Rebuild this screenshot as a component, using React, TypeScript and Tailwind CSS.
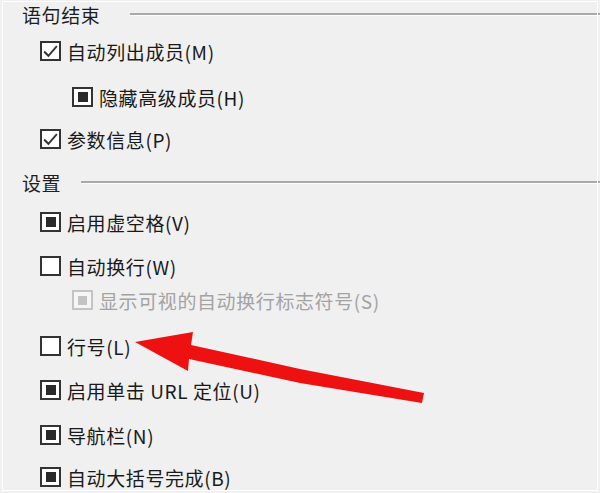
import React from "react";

type Kind = "check" | "fill" | "empty" | "disabled";

function Box({ kind }: { kind: Kind }) {
  if (kind === "disabled") {
    return (
      <div className="w-[21px] h-[20px] border-2 border-[#c4c4c4] bg-[#f6f6f6] flex items-center justify-center shrink-0">
        <div className="w-[9px] h-[9px] bg-[#c4c4c4]" />
      </div>
    );
  }
  return (
    <div className="w-[21px] h-[20px] border-2 border-[#333333] bg-white flex items-center justify-center shrink-0">
      {kind === "fill" && <div className="w-[10px] h-[10px] bg-[#2a2a2a]" />}
      {kind === "check" && (
        <svg width="17" height="16" viewBox="0 0 16 14">
          <path d="M2 7.5 L6 11.5 L14 2.5" fill="none" stroke="#333" strokeWidth="1.8" />
        </svg>
      )}
    </div>
  );
}

function Header({ text, lineLeft, mt }: { text: string; lineLeft: string; mt: string }) {
  return (
    <div className={`flex items-center h-[24px] ${mt}`}>
      <span className="pl-[22px] text-[19px] tracking-[0.6px] leading-none text-[#1e1e1e] shrink-0">{text}</span>
      <div className={`flex-1 ${lineLeft} h-[3px] border-t-2 border-[#a9a9a9] border-b border-b-white`} />
    </div>
  );
}

function Item({ kind, text, indent, mt }: { kind: Kind; text: string; indent: string; mt: string }) {
  const disabled = kind === "disabled";
  return (
    <div className={`flex items-center h-[24px] ${indent} ${mt}`}>
      <Box kind={kind} />
      <span
        className={`ml-[6px] text-[19px] tracking-[0.6px] leading-none whitespace-nowrap ${
          disabled ? "text-[#a3a3a3]" : "text-[#1a1a1a]"
        }`}
      >
        {text}
      </span>
    </div>
  );
}

export default function App() {
  return (
    <div
      className="relative w-[600px] h-[493px] bg-[#f0f0f0] overflow-hidden"
      style={{ fontFamily: '"Noto Sans CJK SC", "Noto Sans", sans-serif' }}
    >
      <div className="absolute left-[2px] top-[1px] right-[2px] bottom-[2px] border border-white pointer-events-none" />
      <div className="flex flex-col pt-[2px]">
        <Header text="语句结束" lineLeft="ml-[30px]" mt="" />
        <Item kind="check" text="自动列出成员(M)" indent="pl-[40px]" mt="mt-[13px]" />
        <Item kind="fill" text="隐藏高级成员(H)" indent="pl-[72px]" mt="mt-[22px]" />
        <Item kind="check" text="参数信息(P)" indent="pl-[40px]" mt="mt-[18px]" />
        <Header text="设置" lineLeft="ml-[20px]" mt="mt-[19px]" />
        <Item kind="fill" text="启用虚空格(V)" indent="pl-[40px]" mt="mt-[16px]" />
        <Item kind="empty" text="自动换行(W)" indent="pl-[40px]" mt="mt-[20px]" />
        <Item kind="disabled" text="显示可视的自动换行标志符号(S)" indent="pl-[72px]" mt="mt-[10px]" />
        <Item kind="empty" text="行号(L)" indent="pl-[40px]" mt="mt-[22px]" />
        <Item kind="fill" text="启用单击 URL 定位(U)" indent="pl-[40px]" mt="mt-[20px]" />
        <Item kind="fill" text="导航栏(N)" indent="pl-[40px]" mt="mt-[21px]" />
        <Item kind="fill" text="自动大括号完成(B)" indent="pl-[40px]" mt="mt-[18px]" />
      </div>
      <svg className="absolute left-0 top-0" width="600" height="493" viewBox="0 0 600 493">
        <path
          d="M135 342 L193 332 L191 345 L300 369 L424 393 L422 403 L300 383 L189 359 L188 371 Z"
          fill="#ee1111"
        />
      </svg>
    </div>
  );
}
